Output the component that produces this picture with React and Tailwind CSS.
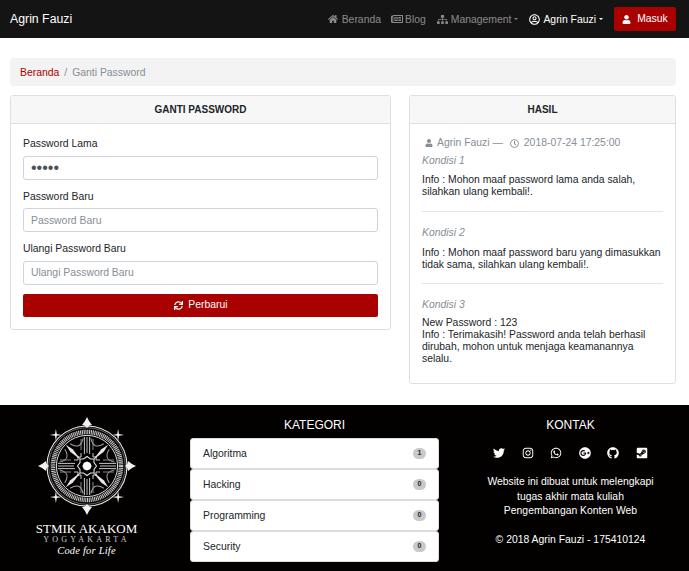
import {
  FaHome, FaRegNewspaper, FaSitemap, FaRegUserCircle, FaUser, FaRegClock, FaSync,
  FaTwitter, FaInstagram, FaWhatsapp, FaGooglePlus, FaGithub, FaSteamSquare,
} from 'react-icons/fa';

const categories = [
  { name: 'Algoritma', count: 1 },
  { name: 'Hacking', count: 0 },
  { name: 'Programming', count: 0 },
  { name: 'Security', count: 0 },
];

const socials = [FaTwitter, FaInstagram, FaWhatsapp, FaGooglePlus, FaGithub, FaSteamSquare];

function Caret() {
  return <span className="ml-[3px] inline-block border-x-[2.5px] border-t-[2.5px] border-x-transparent border-t-current align-middle" />;
}

function Field({ label, placeholder, value, type = 'text' }) {
  return (
    <div className="mb-[9px]">
      <label className="mb-[3.5px] block h-[16px] leading-[16px] text-[#212529]">{label}</label>
      <input
        type={type}
        readOnly
        value={value}
        placeholder={placeholder}
        className={`block h-[24px] w-full rounded-[3px] border border-[#ced4da] bg-white px-[7px] text-[#495057] outline-none placeholder:text-[#868e96] ${type === 'password' ? 'text-[16px]' : 'text-[10.4px]'}`}
      />
    </div>
  );
}

function Logo() {
  const cardinal = [0, 90, 180, 270];
  const diagonal = [45, 135, 225, 315];
  const all = [...cardinal, ...diagonal];
  return (
    <div className="flex flex-col items-center">
      <svg width="102" height="102" viewBox="-51 -51 102 102" className="mt-[10px]">
        {cardinal.map((a) => (
          <g key={a} transform={`rotate(${a})`}>
            <path d="M0 -49 L2 -45 L5 -41 L2.5 -40.5 L0 -38 L-2.5 -40.5 L-5 -41 L-2 -45 Z" fill="#f2f2f2" />
            <path d="M-2.6 -12 L-2.6 -29 M2.6 -12 L2.6 -29 M0 -13 L0 -29" stroke="#c4c4c4" strokeWidth="1" fill="none" />
            <path d="M-6 -16 L-6 -27 M6 -16 L6 -27" stroke="#999" strokeWidth="0.9" fill="none" />
            <path d="M-6 -13 L-6 -9 L-10 -9" stroke="#ccc" strokeWidth="1" fill="none" />
            <path d="M6 -13 L6 -9 L10 -9" stroke="#ccc" strokeWidth="1" fill="none" />
          </g>
        ))}
        {diagonal.map((a) => (
          <g key={a} transform={`rotate(${a})`}>
            <path d="M0 -8 L1.7 -22 L0 -30 L-1.7 -22 Z" fill="#e8e8e8" />
            <g transform="translate(0 -44) rotate(-45)">
              <path d="M0 -6 L0.9 -0.9 L6 0 L0.9 0.9 L0 6 L-0.9 0.9 L-6 0 L-0.9 -0.9 Z" fill="#f2f2f2" />
            </g>
          </g>
        ))}
        {all.map((a) => (
          <path key={a} transform={`rotate(${a + 22.5})`} d="M-7 -27 Q0 -17 7 -27" fill="none" stroke="#a0a0a0" strokeWidth="1" />
        ))}
        <circle r="40" fill="none" stroke="#e8e8e8" strokeWidth="1.1" />
        <circle r="38.3" fill="none" stroke="#a5a5a5" strokeWidth="0.6" />
        <circle r="34" fill="none" stroke="#c4c4c4" strokeWidth="4.6" strokeDasharray="1.1 0.7" />
        <circle r="30.6" fill="none" stroke="#e0e0e0" strokeWidth="1" />
        <path d="M0 -9.5 L3.5 -7 L7 -7 L7 -3.5 L9.5 0 L7 3.5 L7 7 L3.5 7 L0 9.5 L-3.5 7 L-7 7 L-7 3.5 L-9.5 0 L-7 -3.5 L-7 -7 L-3.5 -7 Z" fill="#000" stroke="#e0e0e0" strokeWidth="1.1" />
        <path d="M0 -4.6 L3.2 -3.2 L4.6 0 L3.2 3.2 L0 4.6 L-3.2 3.2 L-4.6 0 L-3.2 -3.2 Z" fill="#fff" />
      </svg>
      <div className="mt-[4px] font-['Liberation_Serif',serif] text-[13px] leading-[15px] text-white">STMIK AKAKOM</div>
      <div className="font-['Liberation_Serif',serif] text-[8px] leading-[8px] tracking-[3.2px] text-[#ccc]">YOGYAKARTA</div>
      <div className="font-['Liberation_Serif',serif] text-[10.5px] italic leading-[14px] tracking-[0.2px] text-white">Code for Life</div>
    </div>
  );
}

export default function App() {
  return (
    <div className="flex min-h-[571px] flex-col overflow-hidden bg-white font-['Liberation_Sans',sans-serif] text-[10.4px] text-[#212529]">
      <nav className="flex h-[38px] items-center bg-[#141414] pl-[10px] pr-[13px]">
        <span className="text-[12.3px] text-white">Agrin Fauzi</span>
        <div className="ml-auto flex items-center pt-[1px] text-[rgba(255,255,255,0.5)]">
          <span className="flex items-center"><FaHome className="mr-[4px] text-[10px]" />Beranda</span>
          <span className="ml-[10px] flex items-center"><FaRegNewspaper className="mr-[2px] text-[12px]" />Blog</span>
          <span className="ml-[11px] flex items-center"><FaSitemap className="mr-[3px] text-[11px]" />Management<Caret /></span>
          <span className="ml-[11px] flex items-center text-white"><FaRegUserCircle className="mr-[3px] text-[11px]" />Agrin Fauzi<Caret /></span>
          <span className="-mt-[1px] ml-[11px] flex h-[24px] w-[62px] items-center justify-center rounded-[2px] bg-[#a90000] text-white"><FaUser className="mr-[6px] text-[9px]" />Masuk</span>
        </div>
      </nav>

      <main className="px-[10px] pt-[20px]">
        <div className="mr-[3px] flex h-[28px] items-center rounded-[4px] bg-[#f3f3f3] px-[10px] pt-[1px]">
          <span className="text-[#a90000]">Beranda</span>
          <span className="px-[5px] text-[#868e96]">/</span>
          <span className="text-[#868e96]">Ganti Password</span>
        </div>

        <div className="mt-[9px] flex items-start justify-between pr-[3px]">
          <section className="w-[381px] rounded-[3px] border border-[#dfdfdf]">
            <h2 className="flex h-[28px] items-center justify-center border-b border-[#dfdfdf] bg-[#f7f7f7] text-[10px] font-bold">GANTI PASSWORD</h2>
            <div className="px-[12px] pb-[12px] pt-[12px]">
              <Field label="Password Lama" value="12345" type="password" />
              <Field label="Password Baru" placeholder="Password Baru" value="" />
              <Field label="Ulangi Password Baru" placeholder="Ulangi Password Baru" value="" />
              <button className="mt-[2.5px] flex h-[23px] w-full items-center justify-center rounded-[2px] bg-[#a90000] pl-[1px] text-white">
                <FaSync className="mr-[5px] text-[9px]" />Perbarui
              </button>
            </div>
          </section>

          <section className="w-[267px] rounded-[3px] border border-[#dfdfdf]">
            <h2 className="flex h-[28px] items-center justify-center border-b border-[#dfdfdf] bg-[#f7f7f7] text-[10px] font-bold">HASIL</h2>
            <div className="px-[12px] pb-[18px] pt-[12px] leading-[12px]">
              <div className="flex h-[14px] items-center pl-[3px] text-[#868e96]">
                <FaUser className="mr-[4px] text-[8px]" />Agrin Fauzi —
                <FaRegClock className="ml-[7px] mr-[5px] text-[9px]" />2018-07-24 17:25:00
              </div>
              <p className="mt-[4px] h-[14px] leading-[14px] italic text-[#868e96]">Kondisi 1</p>
              <p className="mt-[6px] text-[#212529]">Info : Mohon maaf password lama anda salah,<br />silahkan ulang kembali!.</p>
              <hr className="mb-[14px] mt-[13px] border-[#e5e5e5]" />
              <p className="h-[14px] leading-[14px] italic text-[#868e96]">Kondisi 2</p>
              <p className="mt-[7px]">Info : Mohon maaf password baru yang dimasukkan<br />tidak sama, silahkan ulang kembali!.</p>
              <hr className="mb-[14px] mt-[12px] border-[#e5e5e5]" />
              <p className="h-[14px] leading-[14px] italic text-[#868e96]">Kondisi 3</p>
              <p className="mt-[5px]">New Password : 123<br />Info : Terimakasih! Password anda telah berhasil<br />dirubah, mohon untuk menjaga keamanannya<br />selalu.</p>
            </div>
          </section>
        </div>
      </main>

      <footer className="mt-[21px] flex h-[166px] bg-[#030000] text-white">
        <div className="w-[173px]"><Logo /></div>
        <div className="ml-[17px] w-[249px]">
          <h3 className="h-[33px] pt-[12px] text-center text-[12px] leading-[16px]">KATEGORI</h3>
          <ul>
            {categories.map((c) => (
              <li key={c.name} className="flex h-[31px] items-center justify-between rounded-[3px] border border-[#dcdcdc] bg-white pl-[12px] pr-[12px] text-[#212529]">
                {c.name}
                <span className="flex h-[11px] w-[13px] items-center justify-center rounded-full bg-[#c9c9c9] text-[7px] font-bold">{c.count}</span>
              </li>
            ))}
          </ul>
        </div>
        <div className="ml-[31px] w-[201px] text-center">
          <h3 className="h-[33px] pt-[12px] text-[12px] leading-[16px]">KONTAK</h3>
          <div className="mt-[9px] flex justify-between px-[23px] text-[12px]">
            {socials.map((Icon, i) => <Icon key={i} />)}
          </div>
          <p className="mt-[16px] leading-[14.5px]">Website ini dibuat untuk melengkapi<br />tugas akhir mata kuliah<br />Pengembangan Konten Web</p>
          <p className="mt-[14.5px] leading-[14.5px]">© 2018 Agrin Fauzi - 175410124</p>
        </div>
      </footer>
    </div>
  );
}
